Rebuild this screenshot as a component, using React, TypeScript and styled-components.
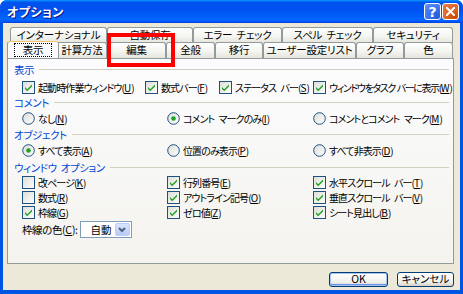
import React from 'react';
import styled, { createGlobalStyle, css } from 'styled-components';

const GlobalStyle = createGlobalStyle`
    html, body {
        margin: 0;
        padding: 0;
        background: #fff;
    }
    * {
        box-sizing: border-box;
    }
`;

const FONT = `"Noto Sans CJK JP", "Noto Sans", sans-serif`;

const Window = styled.div`
    position: relative;
    width: 463px;
    height: 294px;
    display: flex;
    flex-direction: column;
    background: #0054e3;
    border-radius: 7px 7px 0 0;
    overflow: hidden;
    font-family: ${FONT};
    font-size: 10.5px;
    font-feature-settings: "palt";
    letter-spacing: -0.4px;
    color: #000;
`;

const TitleBar = styled.div`
    height: 23px;
    flex: none;
    display: flex;
    align-items: center;
    padding: 0 4px 0 7px;
    background: linear-gradient(#0997ff 0%, #0053ee 10%, #0050ee 40%, #0066ff 85%, #005bff 92%, #003dd7 100%);
`;

const Title = styled.div`
    flex: 1;
    color: #fff;
    font-weight: bold;
    font-size: 12px;
    letter-spacing: 0.5px;
    text-shadow: 1px 1px #0f1089;
`;

const TitleButton = styled.div<{ $close?: boolean }>`
    width: 17px;
    height: 17px;
    margin-left: 1px;
    border: 1px solid #fff;
    border-radius: 3px;
    display: flex;
    align-items: center;
    justify-content: center;
    color: #fff;
    font-family: "DejaVu Sans", sans-serif;
    font-weight: bold;
    font-size: 14px;
    letter-spacing: 0;
    background: ${p => p.$close
        ? 'radial-gradient(circle at 80% 85%, #cc4600 0%, #dc6527 45%, #e77a4c 100%)'
        : 'radial-gradient(circle at 80% 85%, #2c5bd9 0%, #3c72f0 50%, #6a97f6 100%)'};
`;

const Client = styled.div`
    flex: 1;
    margin: 0 3px 4px 3px;
    padding-top: 4px;
    background: #ece9d8;
    display: flex;
    flex-direction: column;
`;

const TabRow = styled.div<{ $left: number; $top?: number }>`
    display: flex;
    padding-left: ${p => p.$left}px;
    margin-top: ${p => p.$top ?? 0}px;
    position: relative;
`;

const Tab = styled.div<{ $w: number; $selected?: boolean }>`
    width: ${p => p.$w}px;
    height: 16px;
    flex: none;
    display: flex;
    align-items: center;
    justify-content: center;
    border: 1px solid #919b9c;
    border-bottom: none;
    border-radius: 3px 3px 0 0;
    background: linear-gradient(#ffffff, #f3f3ef 60%, #e5e4dc);
    white-space: nowrap;
    line-height: 1;
    font-size: 10.5px;
    letter-spacing: -0.2px;
    word-spacing: 2px;
    ${p => p.$selected && css`
        height: 17px;
        margin: -1px -2px 0 -2px;
        width: ${p.$w + 4}px;
        position: relative;
        z-index: 2;
        background: #fcfcfe;
        border-top: 1px solid #f2c36a;
    `}
`;

const FocusText = styled.span`
    outline: 1px dotted #000;
    outline-offset: 0;
    padding: 1px 8px 0;
`;

const Panel = styled.div`
    height: 206px;
    margin: 0 6px 0 4px;
    border: 1px solid #919b9c;
    background: linear-gradient(#fcfcfe, #f4f3ee);
    padding: 3px 4px 0 6px;
    position: relative;
    z-index: 1;
`;

const Section = styled.div<{ $top?: number }>`
    margin-top: ${p => p.$top ?? 0}px;
`;

const Header = styled.div`
    height: 15px;
    display: flex;
    align-items: center;
    color: #0046d5;
    white-space: nowrap;
    word-spacing: 2px;

    &::after {
        content: '';
        flex: 1;
        height: 1px;
        margin-left: 5px;
        background: #d0d0bf;
    }
`;

const Grid = styled.div<{ $cols: string; $top?: number }>`
    display: grid;
    grid-template-columns: ${p => p.$cols};
    grid-auto-rows: 15px;
    padding-left: 8px;
    margin-top: ${p => p.$top ?? 0}px;
`;

const Item = styled.div<{ $tight?: boolean }>`
    display: flex;
    align-items: center;
    gap: 3px;
    white-space: nowrap;
    letter-spacing: ${p => p.$tight ? '-1.4px' : '-0.9px'};
    word-spacing: ${p => p.$tight ? '1px' : '3px'};
    font-size: 10px;

    & > svg {
        flex: none;
    }
`;

const Key = styled.span`
    text-decoration: underline;
    letter-spacing: 0;
`;

const ComboRow = styled.div`
    display: flex;
    align-items: center;
    gap: 2px;
    height: 17px;
    margin: 1px 0 0 8px;
`;

const Combo = styled.div`
    width: 52px;
    height: 17px;
    border: 1px solid #7f9db9;
    background: #fff;
    display: flex;
    align-items: center;
    padding: 1px;
`;

const ComboText = styled.span`
    flex: 1;
    padding-left: 9px;
    letter-spacing: 0;
`;

const ComboButton = styled.div`
    width: 15px;
    height: 13px;
    border-radius: 2px;
    border: 1px solid #bccff9;
    background: linear-gradient(#dbe6fd, #b7cbf7);
    display: flex;
    align-items: center;
    justify-content: center;
`;

const Buttons = styled.div`
    display: flex;
    justify-content: flex-end;
    gap: 9px;
    margin: 8px 6px 0 0;
`;

const Button = styled.div<{ $w: number; $default?: boolean }>`
    width: ${p => p.$w}px;
    height: 15px;
    border: 1px solid #003c74;
    border-radius: 3px;
    display: flex;
    align-items: center;
    justify-content: center;
    background: linear-gradient(#ffffff, #f0f0ea 70%, #d6d0c5);
    box-shadow: ${p => p.$default ? 'inset 0 0 0 1px #a6c3f5, inset 0 -1px 0 1px #6b93ea' : 'none'};
    line-height: 1;
    letter-spacing: 0;
`;

const Highlight = styled.div`
    position: absolute;
    left: 107px;
    top: 33px;
    width: 68px;
    height: 34px;
    border: 4px solid #ff0000;
    z-index: 5;
`;

const CheckBox = ({ checked }: { checked: boolean }) => (
    <svg width="13" height="13" viewBox="0 0 13 13">
        <defs>
            <linearGradient id="cbg" x1="0" y1="0" x2="1" y2="1">
                <stop offset="0" stopColor="#dcdcd7" />
                <stop offset="1" stopColor="#ffffff" />
            </linearGradient>
        </defs>
        <rect x="0.5" y="0.5" width="12" height="12" fill="url(#cbg)" stroke="#1c5180" />
        {checked && (
            <path d="M3 6 L5.2 8.3 L10 3.5 L10 5.6 L5.2 10.3 L3 8 Z" fill="#21a121" />
        )}
    </svg>
);

const Radio = ({ checked }: { checked: boolean }) => (
    <svg width="13" height="13" viewBox="0 0 13 13">
        <defs>
            <linearGradient id="rbg" x1="0" y1="0" x2="1" y2="1">
                <stop offset="0" stopColor="#dcdcd7" />
                <stop offset="1" stopColor="#ffffff" />
            </linearGradient>
        </defs>
        <circle cx="6.5" cy="6.5" r="5.8" fill="url(#rbg)" stroke="#1c5180" />
        {checked && <circle cx="6.5" cy="6.5" r="2.3" fill="#21a121" />}
    </svg>
);

type Opt = { label: string; k: string; on: boolean; tight?: boolean };

const Label = ({ label, k }: { label: string; k: string }) => (
    <span>{label}(<Key>{k}</Key>)</span>
);

const CheckItem = ({ label, on, k, tight }: Opt) => (
    <Item $tight={tight}>
        <CheckBox checked={on} />
        <Label label={label} k={k} />
    </Item>
);

const RadioItem = ({ label, on, k }: Opt) => (
    <Item>
        <Radio checked={on} />
        <Label label={label} k={k} />
    </Item>
);

const backTabs = [
    { label: 'インターナショナル', w: 97 },
    { label: '自動保存', w: 86 },
    { label: 'エラー チェック', w: 89 },
    { label: 'スペル チェック', w: 91 },
    { label: 'セキュリティ', w: 80 },
];

const frontTabs = [
    { label: '表示', w: 48 },
    { label: '計算方法', w: 50 },
    { label: '編集', w: 59 },
    { label: '全般', w: 49 },
    { label: '移行', w: 48 },
    { label: 'ユーザー設定リスト', w: 93 },
    { label: 'グラフ', w: 48 },
    { label: '色', w: 49 },
];

const showOpts: Opt[] = [
    { label: '起動時作業ウィンドウ', k: 'U', on: true },
    { label: '数式バー', k: 'F', on: true },
    { label: 'ステータス バー', k: 'S', on: true },
    { label: 'ウィンドウをタスク バーに表示', k: 'W', on: true, tight: true },
];

const commentOpts: Opt[] = [
    { label: 'なし', k: 'N', on: false },
    { label: 'コメント マークのみ', k: 'I', on: true },
    { label: 'コメントとコメント マーク', k: 'M', on: false },
];

const objectOpts: Opt[] = [
    { label: 'すべて表示', k: 'A', on: true },
    { label: '位置のみ表示', k: 'P', on: false },
    { label: 'すべて非表示', k: 'D', on: false },
];

const windowOpts: Opt[] = [
    { label: '改ページ', k: 'K', on: false },
    { label: '行列番号', k: 'E', on: true },
    { label: '水平スクロール バー', k: 'T', on: true },
    { label: '数式', k: 'R', on: false },
    { label: 'アウトライン記号', k: 'O', on: true },
    { label: '垂直スクロール バー', k: 'V', on: true },
    { label: '枠線', k: 'G', on: true },
    { label: 'ゼロ値', k: 'Z', on: true },
    { label: 'シート見出し', k: 'B', on: true },
];

const COLS = '145px 146px 1fr';

export default function App() {
    return (
        <>
            <GlobalStyle />
            <Window>
                <TitleBar>
                    <Title>オプション</Title>
                    <TitleButton>?</TitleButton>
                    <TitleButton $close>
                        <svg width="9" height="9" viewBox="0 0 9 9">
                            <path d="M1 1 L8 8 M8 1 L1 8" stroke="#fff" strokeWidth="2" strokeLinecap="square" />
                        </svg>
                    </TitleButton>
                </TitleBar>
                <Client>
                    <TabRow $left={7}>
                        {backTabs.map(t => (
                            <Tab key={t.label} $w={t.w}>{t.label}</Tab>
                        ))}
                    </TabRow>
                    <TabRow $left={6} $top={-1}>
                        {frontTabs.map((t, i) => (
                            <Tab key={t.label} $w={t.w} $selected={i === 0}>
                                {i === 0 ? <FocusText>{t.label}</FocusText> : t.label}
                            </Tab>
                        ))}
                    </TabRow>
                    <Panel>
                        <Section>
                            <Header>表示</Header>
                            <Grid $cols="123px 74px 94px 1fr" $top={3}>
                                {showOpts.map(o => <CheckItem key={o.k} {...o} />)}
                            </Grid>
                        </Section>
                        <Section>
                            <Header>コメント</Header>
                            <Grid $cols={COLS} $top={1}>
                                {commentOpts.map(o => <RadioItem key={o.k} {...o} />)}
                            </Grid>
                        </Section>
                        <Section $top={1}>
                            <Header>オブジェクト</Header>
                            <Grid $cols={COLS} $top={1}>
                                {objectOpts.map(o => <RadioItem key={o.k} {...o} />)}
                            </Grid>
                        </Section>
                        <Section $top={2}>
                            <Header>ウィンドウ オプション</Header>
                            <Grid $cols={COLS}>
                                {windowOpts.map(o => <CheckItem key={o.k} {...o} />)}
                            </Grid>
                            <ComboRow>
                                <span>枠線の色(<Key>C</Key>):</span>
                                <Combo>
                                    <ComboText>自動</ComboText>
                                    <ComboButton>
                                        <svg width="8" height="6" viewBox="0 0 8 6">
                                            <path d="M1 1 L4 4 L7 1" stroke="#4d6185" strokeWidth="2" fill="none" />
                                        </svg>
                                    </ComboButton>
                                </Combo>
                            </ComboRow>
                        </Section>
                    </Panel>
                    <Buttons>
                        <Button $w={59} $default>OK</Button>
                        <Button $w={57}>キャンセル</Button>
                    </Buttons>
                </Client>
                <Highlight />
            </Window>
        </>
    );
}
